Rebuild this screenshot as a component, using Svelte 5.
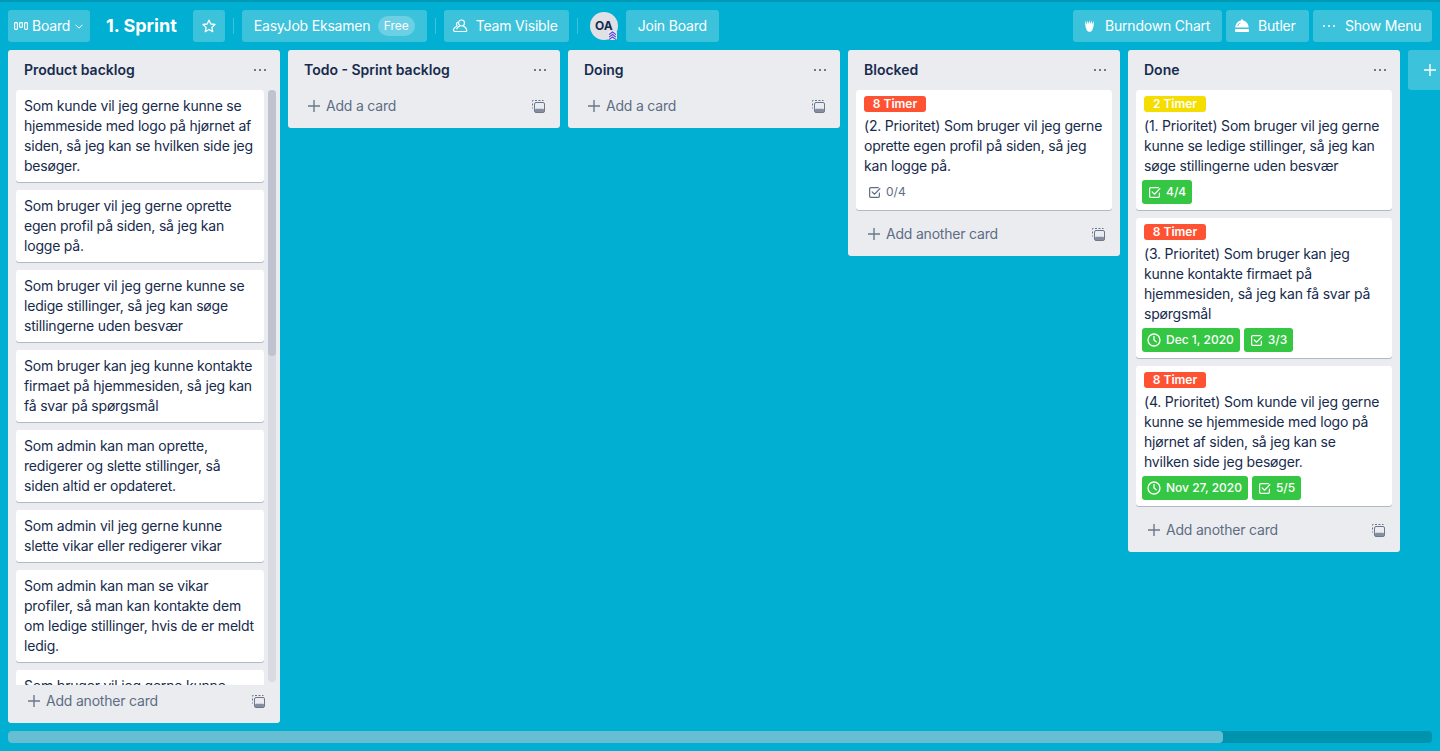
<script>
  const backlog = [
    "Som kunde vil jeg gerne kunne se hjemmeside med logo på hjørnet af siden, så jeg kan se hvilken side jeg besøger.",
    "Som bruger vil jeg gerne oprette egen profil på siden, så jeg kan logge på.",
    "Som bruger vil jeg gerne kunne se ledige stillinger, så jeg kan søge stillingerne uden besvær",
    "Som bruger kan jeg kunne kontakte firmaet på hjemmesiden, så jeg kan få svar på spørgsmål",
    "Som admin kan man oprette, redigerer og slette stillinger, så siden altid er opdateret.",
    "Som admin vil jeg gerne kunne slette vikar eller redigerer vikar",
    "Som admin kan man se vikar profiler, så man kan kontakte dem om ledige stillinger, hvis de er meldt ledig.",
    "Som bruger vil jeg gerne kunne"
  ].map((text) => ({ text }));

  const lists = [
    { title: "Product backlog", add: "Add another card", cards: backlog, scroll: true },
    { title: "Todo - Sprint backlog", add: "Add a card", cards: [] },
    { title: "Doing", add: "Add a card", cards: [] },
    {
      title: "Blocked", add: "Add another card",
      cards: [{ label: "8 Timer", color: "red", text: "(2. Prioritet) Som bruger vil jeg gerne oprette egen profil på siden, så jeg kan logge på.", check: "0/4", plain: true }]
    },
    {
      title: "Done", add: "Add another card",
      cards: [
        { label: "2 Timer", color: "yellow", text: "(1. Prioritet) Som bruger vil jeg gerne kunne se ledige stillinger, så jeg kan søge stillingerne uden besvær", check: "4/4" },
        { label: "8 Timer", color: "red", text: "(3. Prioritet) Som bruger kan jeg kunne kontakte firmaet på hjemmesiden, så jeg kan få svar på spørgsmål", date: "Dec 1, 2020", check: "3/3" },
        { label: "8 Timer", color: "red", text: "(4. Prioritet) Som kunde vil jeg gerne kunne se hjemmeside med logo på hjørnet af siden, så jeg kan se hvilken side jeg besøger.", date: "Nov 27, 2020", check: "5/5" }
      ]
    }
  ];
</script>

{#snippet team()}
  <svg class="ico" viewBox="0 0 16 16" fill="none" stroke="currentColor" stroke-width="1.2" stroke-linejoin="round" stroke-linecap="round">
    <circle cx="9.5" cy="5" r="3"/>
    <path d="M11.5 8.300c1.800.7 3 2.300 3.200 4 .1.700-.4 1.200-1 1.200H3"/>
    <path d="M3 13.500c-1.100 0-1.800-.9-1.500-1.900.4-1.400 1.500-2.600 3-3.100"/>
    <path d="M7.500 8.300c-1.300.5-2.200 1.300-2.800 2.500"/>
    <path d="M5.200 7.900a2.200 2.200 0 0 1 .6-3.700"/>
  </svg>
{/snippet}

{#snippet plus()}
  <svg class="plus" viewBox="0 0 12 12" fill="none" stroke="currentColor" stroke-width="1.4"><path d="M6 0v12M0 6h12"/></svg>
{/snippet}

{#snippet dots()}
  <svg class="dots" viewBox="0 0 12 2" fill="currentColor"><circle cx="1" cy="1" r="1"/><circle cx="6" cy="1" r="1"/><circle cx="11" cy="1" r="1"/></svg>
{/snippet}

{#snippet check()}
  <svg class="badge-ico" viewBox="0 0 12 12" fill="none" stroke="currentColor" stroke-width="1.1" stroke-linejoin="round" stroke-linecap="round">
    <path d="M10.500 6.500v3a1 1 0 0 1-1 1h-7a1 1 0 0 1-1-1v-7a1 1 0 0 1 1-1h7"/>
    <path d="M3.800 5.400 6 7.600 11 2.400"/>
  </svg>
{/snippet}

{#snippet clock()}
  <svg class="clock" viewBox="0 0 14 14" fill="none" stroke="currentColor" stroke-width="1.3" stroke-linecap="round" stroke-linejoin="round">
    <circle cx="7" cy="7" r="6"/><path d="M7 3.500V7l2.200 1.800"/>
  </svg>
{/snippet}

<div class="page">
  <div class="topline"></div>
  <header class="bar">
    <button class="btn board">
      <svg class="boardico" viewBox="0 0 14 8" fill="none" stroke="currentColor" stroke-width="1.1">
        <rect x=".6" y=".6" width="2.8" height="6.8" rx=".8"/><rect x="5.600" y=".6" width="2.8" height="4.8" rx=".8"/><rect x="10.600" y=".6" width="2.8" height="6.8" rx=".8"/>
      </svg>
      <span>Board</span>
      <svg class="chev" viewBox="0 0 8 5" fill="none" stroke="currentColor" stroke-width="1"><path d="M.5.7 4 4.200 7.500.7"/></svg>
    </button>
    <h1>1. Sprint</h1>
    <button class="btn star" aria-label="Star">
      <svg viewBox="0 0 14 14" fill="none" stroke="currentColor" stroke-width="1.3" stroke-linejoin="round"><path d="M7 1.200 8.800 5l4.200.5-3.100 2.900.8 4.200L7 10.500l-3.700 2.100.8-4.200L1 5.500 5.200 5z"/></svg>
    </button>
    <i class="sep"></i>
    <button class="btn org"><span>EasyJob Eksamen</span><b class="free">Free</b></button>
    <i class="sep"></i>
    <button class="btn icon-btn team">{@render team()}<span>Team Visible</span></button>
    <i class="sep"></i>
    <div class="avatar">
      <span>OA</span>
      <svg class="chevs" viewBox="0 0 9 9" fill="none" stroke="#5243d6" stroke-width="1.1"><path d="M1 3.600 4.500 1 8 3.600M1 6.100l3.500-2.600L8 6.100M1 8.600 4.500 6 8 8.600"/></svg>
    </div>
    <button class="btn join">Join Board</button>
    <div class="spring"></div>
    <div class="right">
      <button class="btn icon-btn burnbtn">
        <span class="icobox"><svg class="burn" viewBox="0 0 10 13" fill="currentColor"><path d="M.3.8 2 4.500 2.800.5 4 4 5 0l1 4L7.200.5 8 4.500 9.700.8C10 5 9.500 8 8.500 10 7.800 12 6.500 13 5 13s-2.800-1-3.500-3C.5 8 0 5 .3.800z"/></svg></span>
        <span>Burndown Chart</span>
      </button>
      <button class="btn icon-btn butler">
        <svg class="ico bell" viewBox="0 0 16 14"><path fill="currentColor" d="M7 .5h2v1.100c3.200.5 5.400 3.100 5.700 6.900H1.300C1.600 4.700 3.800 2.100 7 1.600z"/><rect fill="currentColor" x="1" y="10" width="14" height="3" rx=".7"/><path d="M3.800 7c.3-1.500 1.200-2.500 2.600-3" stroke="#3fc4dc" stroke-width=".9" fill="none"/></svg>
        <span>Butler</span>
      </button>
      <button class="btn icon-btn menu"><span class="icobox">{@render dots()}</span><span>Show Menu</span></button>
    </div>
  </header>

  <main class="lists">
    {#each lists as list}
      <section class="list" class:tall={list.scroll}>
        <div class="head"><h2>{list.title}</h2><span class="more">{@render dots()}</span></div>
        {#if list.cards.length}
          <div class="body">
            <div class="cards">
              {#each list.cards as c}
                <article class="card">
                  {#if c.label}<div class="label {c.color}">{c.label}</div>{/if}
                  <p>{c.text}</p>
                  {#if c.check}
                    <div class="badges">
                      {#if c.date}<span class="badge green">{@render clock()}{c.date}</span>{/if}
                      <span class="badge" class:green={!c.plain}>{@render check()}{c.check}</span>
                    </div>
                  {/if}
                </article>
              {/each}
            </div>
            {#if list.scroll}
              <div class="vtrack"><div class="vthumb"></div></div>
            {/if}
          </div>
        {/if}
        <div class="foot">
          <span class="add">{@render plus()}{list.add}</span>
          <svg class="tmpl" viewBox="0 0 13 13" fill="none" stroke="currentColor">
            <path d="M.5 8.500v-1M.5 5.500v-2M.5 1.500v-1h1M3 .5h2M6.500.5h2M10 .5h1.500" stroke-width="1"/>
            <rect x="2.500" y="2.500" width="10" height="10" rx="1.500" stroke-width="1"/>
            <rect x="3" y="8.800" width="9" height="3.400" rx="1" fill="currentColor" fill-opacity=".8" stroke="none"/>
          </svg>
        </div>
      </section>
    {/each}
    <button class="addlist" aria-label="Add list">{@render plus()}</button>
  </main>

  <div class="htrack"><div class="hthumb"></div></div>
</div>

<style>
  :global(body) { margin: 0; background: #00afd2; }
  .page {
    width: 1440px; height: 751px; overflow: hidden; display: flex; flex-direction: column;
    background: #00afd2; color: #172b4d;
    font-family: Inter, "Noto Sans", sans-serif; font-size: 14px; line-height: 20px; letter-spacing: -.2px;
  }
  .topline { height: 2px; background: #0098b7; flex: none; }
  .bar { display: flex; align-items: center; height: 48px; box-sizing: border-box; padding: 8px; flex: none; }
  .btn {
    height: 32px; border: 0; border-radius: 3px; background: rgba(255,255,255,.24); color: #fff;
    font: 14px/20px Inter, "Noto Sans", sans-serif; letter-spacing: -.2px; display: flex; align-items: center; padding: 0 12px; flex: none; white-space: nowrap; box-sizing: border-box;
  }
  .board { width: 82px; padding: 0 6px; margin-right: 16px; }
  .boardico { width: 14px; height: 8px; margin-right: 4px; }
  .chev { width: 8px; height: 5px; margin-left: 5px; margin-top: 1px; }
  h1 { font-size: 18px; line-height: 32px; font-weight: 700; color: #fff; margin: 0 16px 0 0; white-space: nowrap; letter-spacing: 0; }
  .star { width: 32px; padding: 0 9px; }
  .star svg { width: 14px; height: 14px; }
  .sep { width: 1px; height: 16px; background: rgba(255,255,255,.24); margin: 0 8px; flex: none; }
  .org { width: 185px; }
  .free { font-weight: 400; font-size: 12px; margin-left: auto; width: 37px; text-align: center; height: 20px; border-radius: 10px; background: rgba(255,255,255,.24); line-height: 20px; letter-spacing: 0; }
  .icon-btn { padding: 0 12px 0 8px; }
  .team { width: 125px; }
  .burnbtn { width: 149px; }
  .butler { width: 83px; }
  .menu { width: 119px; }
  .ico, .icobox { width: 16px; height: 16px; margin-right: 8px; flex: none; }
  .icobox { display: flex; align-items: center; justify-content: center; }
  .burn { width: 9px; height: 12px; }
  .avatar {
    position: relative; width: 28px; height: 28px; border-radius: 50%; background: #dfe1e6; color: #172b4d;
    font-size: 12px; font-weight: 700; letter-spacing: 0; display: flex; align-items: center; justify-content: center; margin: 0 8px 0 4px; flex: none;
  }
  .chevs { position: absolute; right: 1px; bottom: 0; width: 9px; height: 9px; background: #e8e8ee; border-radius: 2px; }
  .join { width: 93px; justify-content: center; padding: 0; }
  .spring { flex: 1; }
  .right { display: flex; gap: 4px; }
  .lists { display: flex; align-items: flex-start; gap: 8px; padding: 0 8px; height: 681px; box-sizing: border-box; flex: none; }
  .list { width: 272px; flex: none; background: #ebecf0; border-radius: 3px; display: flex; flex-direction: column; }
  .list.tall { height: 673px; }
  .head { height: 40px; display: flex; align-items: center; justify-content: space-between; padding: 0 14px 0 16px; flex: none; }
  h2 { margin: 0; font-size: 14px; font-weight: 600; line-height: 20px; letter-spacing: 0; }
  .more { display: flex; color: #42526e; }
  .dots { width: 12px; height: 2px; display: block; }
  .body { display: flex; flex: 1; min-height: 0; overflow: hidden; }
  .cards { flex: 1; margin: 0 8px; min-width: 0; min-height: 0; }
  .vtrack { width: 8px; margin: 0 4px 0 -4px; height: 592px; background: #dadbe2; border-radius: 4px; flex: none; }
  .vthumb { height: 266px; background: #bfc3d0; border-radius: 4px; }
  .card { background: #fff; border-radius: 3px; box-shadow: 0 1px 0 rgba(9,30,66,.25); padding: 6px 8px; margin-bottom: 8px; }
  .card p { margin: 0; }
  .label { height: 16px; line-height: 16px; width: 62px; box-sizing: border-box; border-radius: 3px; color: #fff; font-size: 12px; font-weight: 600; letter-spacing: 0; text-align: center; margin-bottom: 4px; }
  .red { background: #ff5233; }
  .yellow { background: #f5dd00; }
  .badges { display: flex; gap: 4px; margin: 4px 0 0 -2px; height: 24px; }
  .badge { display: flex; align-items: center; height: 24px; padding: 0 6px; border-radius: 3px; font-size: 12px; color: #5e6c84; letter-spacing: 0; }
  .green { background: #35c643; color: #fff; font-weight: 500; }
  .badge-ico { width: 13px; height: 13px; margin-right: 5px; }
  .clock { width: 14px; height: 14px; margin-left: -1px; margin-right: 5px; }
  .foot { height: 38px; box-sizing: border-box; padding: 0 15px 6px 20px; flex: none; display: flex; align-items: center; justify-content: space-between; color: #5e6c84; }
  .add { display: flex; align-items: center; }
  .plus { width: 12px; height: 12px; margin-right: 6px; color: #6b778c; }
  .tmpl { width: 13px; height: 13px; color: #6b778c; }
  .addlist { width: 272px; height: 40px; border: 0; border-radius: 3px; background: rgba(255,255,255,.24); color: #fff; display: flex; align-items: center; padding: 0 16px; flex: none; }
  .addlist .plus { color: #fff; margin: 0; }
  .htrack { height: 12px; margin: 0 8px; background: #0093ad; border-radius: 4px; flex: none; }
  .hthumb { width: 1215px; height: 12px; background: #66bed3; border-radius: 4px; }
</style>
